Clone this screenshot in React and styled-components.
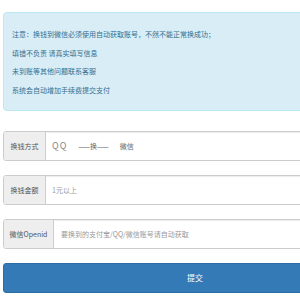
import React from "react";
import styled, { createGlobalStyle } from "styled-components";

const GlobalStyle = createGlobalStyle`
  html, body {
    margin: 0;
    padding: 0;
    background: #fff;
    overflow: hidden;
  }
  body {
    font-family: "Noto Sans CJK SC", "Noto Sans", sans-serif;
  }
`;

const Page = styled.div`
  width: 384px;
  margin-left: 3px;
  padding-top: 12px;
  display: flex;
  flex-direction: column;
`;

const Alert = styled.div`
  background: #d9edf7;
  border: 1px solid #bce8f1;
  border-radius: 4px;
  color: #31708f;
  padding: 12px 8px 10px;
  font-size: 7px;
  line-height: 18.7px;
  margin-bottom: 20px;
`;

const Form = styled.form`
  display: flex;
  flex-direction: column;
  gap: 14px;
`;

const Group = styled.div`
  display: flex;
  height: 30px;
  border: 1px solid #ccc;
  border-radius: 3px;
  overflow: hidden;
  box-sizing: border-box;
  box-shadow: inset 0 1px 1px rgba(0, 0, 0, 0.075);
`;

const Addon = styled.span`
  display: flex;
  align-items: center;
  justify-content: center;
  background: #eee;
  border-right: 1px solid #ccc;
  color: #555;
  font-size: 7px;
  width: ${(p) => (p.$wide ? 50 : 42)}px;
  box-sizing: border-box;
  white-space: nowrap;
`;

const Field = styled.div`
  flex: 1;
  display: flex;
  align-items: center;
  gap: 11px;
  padding-left: 6px;
`;

const Big = styled.span`
  font-size: 9px;
  color: #888;
  letter-spacing: 1px;
`;

const Small = styled.span`
  font-size: 7px;
  color: #666;
`;

const Input = styled.input`
  flex: 1;
  border: none;
  outline: none;
  background: transparent;
  padding: 0 ${(p) => p.$pad || 6}px;
  font-family: inherit;
  font-size: 7px;
  color: #555;
  &::placeholder {
    color: #999;
  }
`;

const Submit = styled.button`
  height: 30px;
  border: 1px solid #2e6da4;
  border-radius: 3px;
  background: #337ab7;
  color: #fff;
  font-family: inherit;
  font-size: 8px;
  cursor: pointer;
`;

export default function App() {
  return (
    <>
      <GlobalStyle />
      <Page>
        <Alert>
          注意：换钱到微信必须使用自动获取账号，不然不能正常换成功；
          <br />
          填错不负责 请真实填写信息
          <br />
          未到账等其他问题联系客服
          <br />
          系统会自动增加手续费提交支付
        </Alert>
        <Form onSubmit={(e) => e.preventDefault()}>
          <Group>
            <Addon>换钱方式</Addon>
            <Field>
              <Big>QQ</Big>
              <Small>——换——</Small>
              <Small>微信</Small>
            </Field>
          </Group>
          <Group>
            <Addon>换钱金额</Addon>
            <Input placeholder="1元以上" />
          </Group>
          <Group>
            <Addon $wide>微信Openid</Addon>
            <Input $pad={7} placeholder="要换到的支付宝/QQ/微信账号请自动获取" />
          </Group>
          <Submit type="submit">提交</Submit>
        </Form>
      </Page>
    </>
  );
}
